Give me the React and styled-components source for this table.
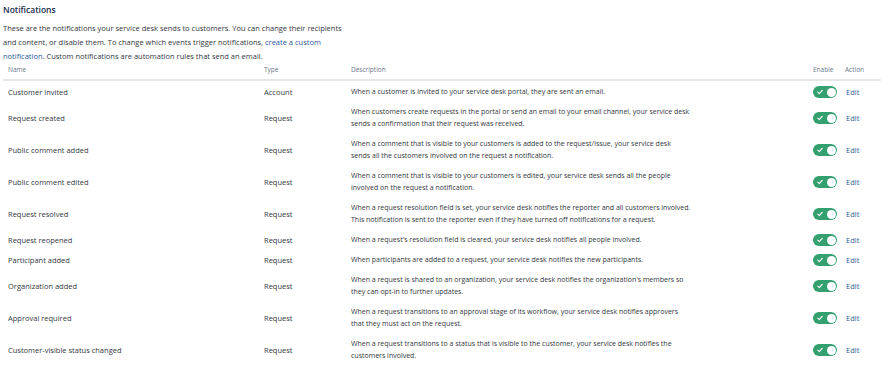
import React from "react";
import styled, { createGlobalStyle } from "styled-components";

const Global = createGlobalStyle`
  html, body { margin: 0; padding: 0; background: #ffffff; }
  body { font-family: "Open Sans", "Noto Sans", sans-serif; color: #333842; }
  * { box-sizing: border-box; }
`;

const Page = styled.div`
  width: 881px;
  height: 366px;
  overflow: hidden;
  padding: 3px 0 0 3px;
`;

const Title = styled.h2`
  margin: 0;
  font-size: 8.5px;
  line-height: 13px;
  font-weight: 600;
  color: #172b4d;
`;

const Intro = styled.p`
  margin: 5px 0 0 0;
  font-size: 7.5px;
  line-height: 14px;
  color: #333842;
`;

const IntroLine = styled.span`
  display: block;
  white-space: nowrap;
`;

const Link = styled.a`
  color: #2a5799;
  text-decoration: none;
`;

const Table = styled.div`
  display: grid;
  grid-template-columns: 256px 87px 462px 32px 1fr;
`;

const HeadCell = styled.div`
  padding: 1px 0 3px 5px;
  font-size: 6.5px;
  line-height: 12px;
  color: #6b778c;
  border-bottom: 2px solid #e4e6ea;
`;

const Cell = styled.div`
  padding: 5px 0 3px 5px;
  font-size: 7.5px;
  line-height: 12px;
  color: #333842;
  display: flex;
  align-items: center;
`;

const DescCell = styled(Cell)`
  display: block;
  font-size: 7px;
`;

const Line = styled.span`
  display: block;
  white-space: nowrap;
`;

const Toggle = styled.span`
  position: relative;
  display: inline-flex;
  align-items: center;
  width: 24px;
  height: 12px;
  border-radius: 6px;
  background: #34a06f;
  flex: none;
`;

const Knob = styled.span`
  position: absolute;
  right: 1.5px;
  top: 1.5px;
  width: 9px;
  height: 9px;
  border-radius: 50%;
  background: #ffffff;
`;

const Check = styled.svg`
  position: absolute;
  left: 4px;
  top: 3px;
`;

const EditLink = styled.a`
  color: #2a5799;
  text-decoration: none;
  padding-left: 1px;
`;

const rows = [
  ["Customer invited", "Account", ["When a customer is invited to your service desk portal, they are sent an email."]],
  ["Request created", "Request", ["When customers create requests in the portal or send an email to your email channel, your service desk", "sends a confirmation that their request was received."]],
  ["Public comment added", "Request", ["When a comment that is visible to your customers is added to the request/issue, your service desk", "sends all the customers involved on the request a notification."]],
  ["Public comment edited", "Request", ["When a comment that is visible to your customers is edited, your service desk sends all the people", "involved on the request a notification."]],
  ["Request resolved", "Request", ["When a request resolution field is set, your service desk notifies the reporter and all customers involved.", "This notification is sent to the reporter even if they have turned off notifications for a request."]],
  ["Request reopened", "Request", ["When a request's resolution field is cleared, your service desk notifies all people involved."]],
  ["Participant added", "Request", ["When participants are added to a request, your service desk notifies the new participants."]],
  ["Organization added", "Request", ["When a request is shared to an organization, your service desk notifies the organization's members so", "they can opt-in to further updates."]],
  ["Approval required", "Request", ["When a request transitions to an approval stage of its workflow, your service desk notifies approvers", "that they must act on the request."]],
  ["Customer-visible status changed", "Request", ["When a request transitions to a status that is visible to the customer, your service desk notifies the", "customers involved."]],
];

export default function App() {
  return (
    <Page>
      <Global />
      <Title>Notifications</Title>
      <Intro>
        <IntroLine>These are the notifications your service desk sends to customers. You can change their recipients</IntroLine>
        <IntroLine>and content, or disable them. To change which events trigger notifications, <Link href="#">create a custom</Link></IntroLine>
        <IntroLine><Link href="#">notification</Link>. Custom notifications are automation rules that send an email.</IntroLine>
      </Intro>
      <Table>
        <HeadCell>Name</HeadCell>
        <HeadCell>Type</HeadCell>
        <HeadCell>Description</HeadCell>
        <HeadCell>Enable</HeadCell>
        <HeadCell>Action</HeadCell>
        {rows.map(([name, type, desc]) => (
          <React.Fragment key={name}>
            <Cell>{name}</Cell>
            <Cell>{type}</Cell>
            <DescCell>
              {desc.map((l) => (
                <Line key={l}>{l}</Line>
              ))}
            </DescCell>
            <Cell>
              <Toggle>
                <Check width="6" height="6" viewBox="0 0 6 6">
                  <path d="M0.8 3.1 L2.4 4.6 L5.2 1.4" fill="none" stroke="#fff" strokeWidth="1.2" strokeLinecap="round" strokeLinejoin="round" />
                </Check>
                <Knob />
              </Toggle>
            </Cell>
            <Cell>
              <EditLink href="#">Edit</EditLink>
            </Cell>
          </React.Fragment>
        ))}
      </Table>
    </Page>
  );
}
